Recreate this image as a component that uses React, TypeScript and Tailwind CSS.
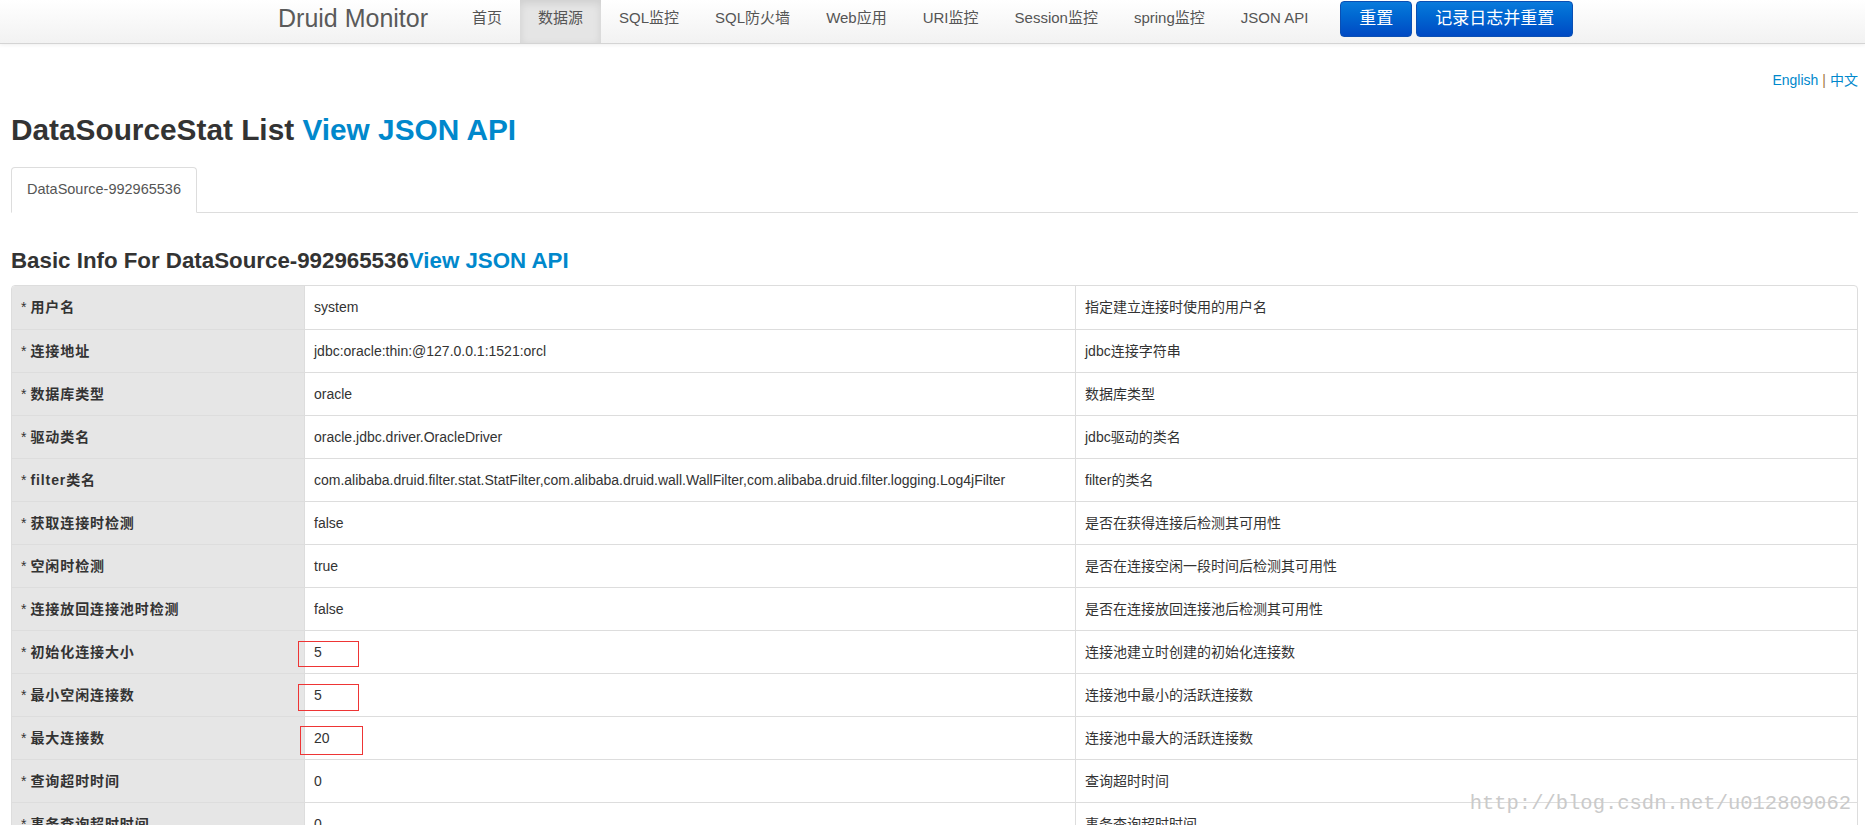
const navItems = ['首页', '数据源', 'SQL监控', 'SQL防火墙', 'Web应用', 'URI监控', 'Session监控', 'spring监控', 'JSON API'];

type Row = {
    label: string;
    value: string;
    desc: string;
    mark?: string;
};

const rows: Row[] = [
    { label: '用户名', value: 'system', desc: '指定建立连接时使用的用户名' },
    { label: '连接地址', value: 'jdbc:oracle:thin:@127.0.0.1:1521:orcl', desc: 'jdbc连接字符串' },
    { label: '数据库类型', value: 'oracle', desc: '数据库类型' },
    { label: '驱动类名', value: 'oracle.jdbc.driver.OracleDriver', desc: 'jdbc驱动的类名' },
    {
        label: 'filter类名',
        value: 'com.alibaba.druid.filter.stat.StatFilter,com.alibaba.druid.wall.WallFilter,com.alibaba.druid.filter.logging.Log4jFilter',
        desc: 'filter的类名',
    },
    { label: '获取连接时检测', value: 'false', desc: '是否在获得连接后检测其可用性' },
    { label: '空闲时检测', value: 'true', desc: '是否在连接空闲一段时间后检测其可用性' },
    { label: '连接放回连接池时检测', value: 'false', desc: '是否在连接放回连接池后检测其可用性' },
    { label: '初始化连接大小', value: '5', desc: '连接池建立时创建的初始化连接数', mark: 'top-[10px] left-[286px] w-[61px] h-[26px]' },
    { label: '最小空闲连接数', value: '5', desc: '连接池中最小的活跃连接数', mark: 'top-[10px] left-[286px] w-[61px] h-[27px]' },
    { label: '最大连接数', value: '20', desc: '连接池中最大的活跃连接数', mark: 'top-[9px] left-[288px] w-[63px] h-[29px]' },
    { label: '查询超时时间', value: '0', desc: '查询超时时间' },
    { label: '事务查询超时时间', value: '0', desc: '事务查询超时时间' },
    { label: 'PSCache', value: 'false', desc: '是否缓存preparedStatement' },
];

export default function App() {
    return (
        <div className="relative h-[825px] overflow-hidden bg-white text-[#333] font-['Liberation_Sans','Noto_Sans_CJK_SC',sans-serif]">
            <nav className="h-[44px] border-b border-[#d4d4d4] bg-linear-to-b from-white to-[#f2f2f2] shadow-[0_1px_4px_rgba(0,0,0,0.065)]">
                <div className="flex h-full pl-[278px]">
                    <div className="mr-[26px] flex items-center pb-[6px] text-[25px] text-[#5a5a5a]">Druid Monitor</div>
                    {navItems.map((item) => (
                        <div
                            key={item}
                            className={
                                item === '数据源'
                                    ? 'flex items-center px-[18px] pb-[6px] text-[15px] text-[#555] bg-[#e5e5e5] shadow-[inset_0_3px_8px_rgba(0,0,0,0.1)]'
                                    : 'flex items-center px-[18px] pb-[6px] text-[15px] text-[#555]'
                            }
                        >
                            {item}
                        </div>
                    ))}
                    <div className="ml-[14px] mt-[1px] flex h-[36px] gap-[4px]">
                        <button className="rounded-[4px] border border-[#0a4fb3] bg-linear-to-b from-[#0a7bdb] to-[#0049c3] px-[18px] text-[17px] text-white">
                            重置
                        </button>
                        <button className="rounded-[4px] border border-[#0a4fb3] bg-linear-to-b from-[#0a7bdb] to-[#0049c3] px-[18px] text-[17px] text-white">
                            记录日志并重置
                        </button>
                    </div>
                </div>
            </nav>

            <div className="pl-[11px] pr-[7px]">
                <div className="mt-[26px] flex justify-end text-[14px] leading-[20px]">
                    <span className="text-[#0088cc]">English</span>
                    <span className="mx-[4px] text-[#a0793f]">|</span>
                    <span className="text-[#0088cc]">中文</span>
                </div>

                <h1 className="mt-[22px] text-[29.8px] font-bold leading-[36px]">
                    DataSourceStat List <span className="text-[#0088cc]">View JSON API</span>
                </h1>

                <div className="mt-[19px] flex h-[46px] border-b border-[#ddd]">
                    <div className="-mb-px flex h-[46px] items-center rounded-t-[4px] border border-[#ddd] border-b-white bg-white px-[15px] text-[14.5px] text-[#555]">
                        DataSource-992965536
                    </div>
                </div>

                <h3 className="mt-[35px] text-[22.3px] font-bold leading-[26px]">
                    Basic Info For DataSource-992965536<span className="text-[#0088cc]">View JSON API</span>
                </h3>

                <div className="mt-[11px] overflow-hidden rounded-[4px] border border-[#ddd] text-[14px]">
                    {rows.map((row, i) => (
                        <div
                            key={row.label}
                            className={
                                i === 0
                                    ? 'relative grid h-[43px] grid-cols-[292px_771px_1fr]'
                                    : 'relative grid h-[43px] grid-cols-[292px_771px_1fr] border-t border-[#ddd]'
                            }
                        >
                            <div className="flex items-center bg-[#e6e6e6] px-[9px]">
                                <span>*</span>
                                <span className="ml-[4px] font-bold tracking-[0.9px]">{row.label}</span>
                            </div>
                            <div className="flex items-center border-l border-[#ddd] px-[9px] whitespace-nowrap">{row.value}</div>
                            <div className="flex items-center border-l border-[#ddd] px-[9px]">{row.desc}</div>
                            {row.mark && <div className={`absolute border border-[#ee3535] ${row.mark}`} />}
                        </div>
                    ))}
                </div>
            </div>

            <div className="absolute right-[14px] top-[794px] text-[20.5px] leading-none text-[#cacaca] font-['Liberation_Mono',monospace]">
                http://blog.csdn.net/u012809062
            </div>
        </div>
    );
}
